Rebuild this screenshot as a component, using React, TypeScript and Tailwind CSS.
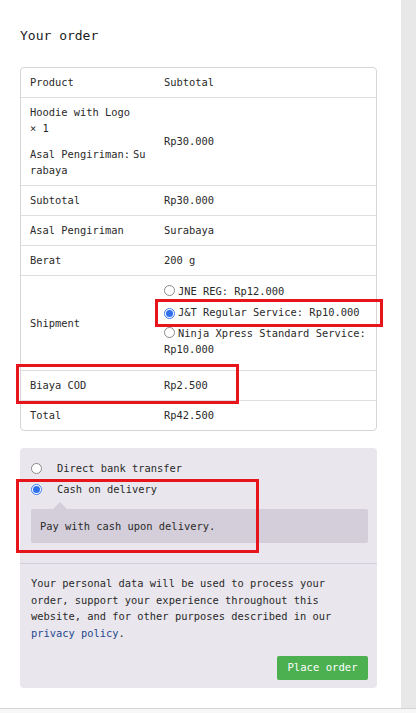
import React from 'react';

const mono = { fontFamily: '"DejaVu Sans Mono", "Liberation Mono", monospace' };

type Row = { label: string; value: React.ReactNode };

const Radio = ({ checked }: { checked?: boolean }) =>
  checked ? (
    <span className="inline-flex h-[11px] w-[11px] shrink-0 items-center justify-center rounded-full border border-[#3b7cf5] bg-white">
      <span className="h-[7px] w-[7px] rounded-full bg-[#2f6fec]" />
    </span>
  ) : (
    <span className="inline-block h-[11px] w-[11px] shrink-0 rounded-full border border-[#8a8a8a] bg-white" />
  );

const shipping = [
  { name: 'JNE REG: Rp12.000', checked: false },
  { name: 'J&T Regular Service: Rp10.000', checked: true },
  { name: 'Ninja Xpress Standard Service: Rp10.000', checked: false },
];

export default function App() {
  const rows: Row[] = [
    { label: 'Subtotal', value: 'Rp30.000' },
    { label: 'Asal Pengiriman', value: 'Surabaya' },
    { label: 'Berat', value: '200 g' },
  ];

  const cell = 'border-t border-[#dedede] px-[9px] py-[7px] align-middle';

  return (
    <div className="flex h-[713px] w-[416px] flex-col text-[10.4px] leading-[15px] text-[#2a2a2a]" style={mono}>
      <div className="flex flex-1">
        <div className="relative w-[401px] bg-white pl-[20px] pr-[24px] pt-[26px]">
          <h3 className="text-[13px] leading-[20px] text-[#1c1c1c]">Your order</h3>

          {/* order review table */}
          <div className="mt-[21px] overflow-hidden rounded-[4px] border border-[#d6d6d6]">
            <table className="w-full table-fixed border-collapse text-left">
              <thead>
                <tr>
                  <th className="w-[134px] px-[9px] py-[7px] font-normal">Product</th>
                  <th className="px-[9px] py-[7px] font-normal">Subtotal</th>
                </tr>
              </thead>
              <tbody>
                <tr>
                  <td className="border-t border-[#dedede] px-[9px] pb-[7px] pt-[6px] align-middle leading-[16px]">
                    <div>Hoodie with Logo</div>
                    <div>× 1</div>
                    <div className="mt-[10px]">
                      Asal Pengiriman:<span className="ml-[3px]">Su</span>
                      <br />
                      rabaya
                    </div>
                  </td>
                  <td className={cell}>Rp30.000</td>
                </tr>
                {rows.map((r) => (
                  <tr key={r.label}>
                    <td className={cell}>{r.label}</td>
                    <td className={cell}>{r.value}</td>
                  </tr>
                ))}
                <tr>
                  <td className={cell}>Shipment</td>
                  <td className="border-t border-[#dedede] px-[9px] pb-[13px] pt-[7px] align-middle leading-[16px]">
                    <ul>
                      {shipping.map((s) => (
                        <li key={s.name} className="mb-[5px] last:mb-0">
                          <span className="mr-[3px] inline-flex translate-y-[1px]">
                            <Radio checked={s.checked} />
                          </span>
                          {s.name}
                        </li>
                      ))}
                    </ul>
                  </td>
                </tr>
                <tr>
                  <td className={cell}>Biaya COD</td>
                  <td className={cell}>Rp2.500</td>
                </tr>
                <tr>
                  <td className={cell}>Total</td>
                  <td className={cell}>Rp42.500</td>
                </tr>
              </tbody>
            </table>
          </div>

          {/* payment methods */}
          <div className="mt-[17px] rounded-[4px] bg-[#e9e6ed]">
            <ul className="pl-[11px] pr-[9px] pb-[20px] pt-[10px]">
              <li className="flex h-[21px] items-center">
                <Radio />
                <span className="ml-[15px]">Direct bank transfer</span>
              </li>
              <li className="flex h-[21px] items-center">
                <Radio checked />
                <span className="ml-[15px]">Cash on delivery</span>
              </li>
              <li className="relative mt-[9px] rounded-[2px] bg-[#d3ced9] px-[9px] py-[9px] leading-[16px]">
                <span className="absolute left-[22px] top-[-7px] h-0 w-0 border-x-[7px] border-b-[7px] border-x-transparent border-b-[#d3ced9]" />
                Pay with cash upon delivery.
              </li>
            </ul>
            <div className="border-t border-[#d3ced9] pl-[11px] pr-[9px] pb-[8px] pt-[11px]">
              <p className="leading-[16.7px]">
                Your personal data will be used to process your order, support your experience throughout this
                website, and for other purposes described in our{' '}
                <a className="text-[#27498d]">privacy policy</a>.
              </p>
              <div className="mt-[14px] flex justify-end">
                <button className="h-[24px] w-[91px] rounded-[2px] bg-[#4caf50] text-[10.6px] text-white">
                  Place order
                </button>
              </div>
            </div>
          </div>

          {/* highlight marks */}
          <div className="pointer-events-none absolute left-[155px] top-[299px] h-[28px] w-[228px] border-[3px] border-[#e8141b]" />
          <div className="pointer-events-none absolute left-[16px] top-[364px] h-[40px] w-[223px] border-[3px] border-[#e8141b]" />
          <div className="pointer-events-none absolute left-[16px] top-[479px] h-[74px] w-[243px] border-[3px] border-[#e8141b]" />
        </div>
        <div className="flex-1 bg-[#e8e8e8]" />
      </div>
      <div className="h-[5px] border-t border-[#d4d4d4] bg-[#f7f7f7]" />
    </div>
  );
}
